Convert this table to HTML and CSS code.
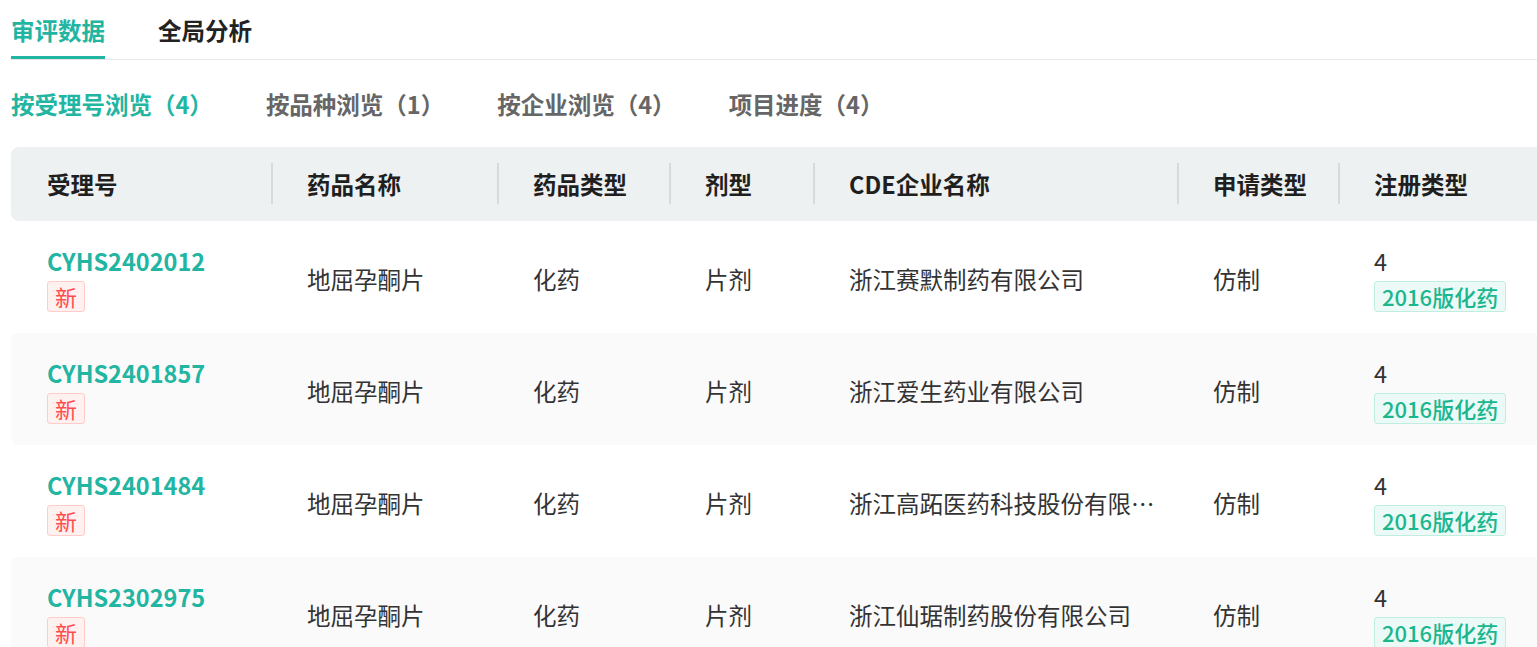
FILE: index.html
```html
<!DOCTYPE html>
<html lang="zh-CN">
<head>
<meta charset="utf-8">
<title>审评数据</title>
<link rel="stylesheet" href="styles.css">
</head>
<body>
<div class="page">
  <nav class="tabs">
    <a class="tab active">审评数据</a>
    <a class="tab">全局分析</a>
  </nav>
  <nav class="subtabs">
    <a class="subtab active">按受理号浏览（4）</a>
    <a class="subtab">按品种浏览（1）</a>
    <a class="subtab">按企业浏览（4）</a>
    <a class="subtab">项目进度（4）</a>
  </nav>
  <div class="table">
    <div class="row head">
      <div class="cell">受理号</div>
      <div class="cell sep">药品名称</div>
      <div class="cell sep">药品类型</div>
      <div class="cell sep">剂型</div>
      <div class="cell sep">CDE企业名称</div>
      <div class="cell sep">申请类型</div>
      <div class="cell sep">注册类型</div>
    </div>
    <div class="row">
      <div class="cell stack"><span class="code">CYHS2402012</span><span class="badge-new">新</span></div>
      <div class="cell">地屈孕酮片</div>
      <div class="cell">化药</div>
      <div class="cell">片剂</div>
      <div class="cell"><span class="ellipsis">浙江赛默制药有限公司</span></div>
      <div class="cell">仿制</div>
      <div class="cell stack"><span class="num">4</span><span class="tag">2016版化药</span></div>
    </div>
    <div class="row alt">
      <div class="cell stack"><span class="code">CYHS2401857</span><span class="badge-new">新</span></div>
      <div class="cell">地屈孕酮片</div>
      <div class="cell">化药</div>
      <div class="cell">片剂</div>
      <div class="cell"><span class="ellipsis">浙江爱生药业有限公司</span></div>
      <div class="cell">仿制</div>
      <div class="cell stack"><span class="num">4</span><span class="tag">2016版化药</span></div>
    </div>
    <div class="row">
      <div class="cell stack"><span class="code">CYHS2401484</span><span class="badge-new">新</span></div>
      <div class="cell">地屈孕酮片</div>
      <div class="cell">化药</div>
      <div class="cell">片剂</div>
      <div class="cell"><span class="ellipsis" title="浙江高跖医药科技股份有限公司">浙江高跖医药科技股份有限…</span></div>
      <div class="cell">仿制</div>
      <div class="cell stack"><span class="num">4</span><span class="tag">2016版化药</span></div>
    </div>
    <div class="row alt">
      <div class="cell stack"><span class="code">CYHS2302975</span><span class="badge-new">新</span></div>
      <div class="cell">地屈孕酮片</div>
      <div class="cell">化药</div>
      <div class="cell">片剂</div>
      <div class="cell"><span class="ellipsis">浙江仙琚制药股份有限公司</span></div>
      <div class="cell">仿制</div>
      <div class="cell stack"><span class="num">4</span><span class="tag">2016版化药</span></div>
    </div>
  </div>
</div>
</body>
</html>
```

FILE: styles.css
```css
* { box-sizing: border-box; }
html, body { margin: 0; padding: 0; background: #fff; }
body {
  font-family: "Noto Sans CJK SC", "Noto Sans", sans-serif;
  font-size: 23.5px;
  color: #333;
  overflow: hidden;
}
.page {
  padding: 0 0 0 11px;
  width: 1700px;
}
.tabs {
  display: flex;
  gap: 53px;
  border-bottom: 1px solid #e8e8e8;
  width: 1526px;
}
.tab {
  display: block;
  padding: 14px 0 10px;
  line-height: 32px;
  font-weight: 700;
  color: #222;
  border-bottom: 3px solid transparent;
}
.tab.active {
  color: #22b5a2;
  border-bottom-color: #22b5a2;
}
.subtabs {
  display: flex;
  gap: 53px;
  margin-top: 28px;
  line-height: 32px;
}
.subtab {
  font-weight: 700;
  color: #666;
}
.subtab.active { color: #22b5a2; }
.table {
  margin-top: 27px;
  width: 1560px;
}
.row {
  display: grid;
  grid-template-columns: 260px 226px 172px 144px 364px 161px 233px;
  height: 112px;
  border-radius: 8px;
}
.row.alt { background: #fafafa; }
.row.head {
  height: 74px;
  background: #edf1f2;
  font-weight: 700;
  color: #1f1f1f;
}
.cell {
  display: flex;
  align-items: center;
  padding: 3px 20px 0 36px;
  line-height: 32px;
  min-width: 0;
}
.head .cell { padding-top: 0; }
.cell.sep { position: relative; }
.head .cell.sep::before {
  content: "";
  position: absolute;
  left: 0;
  top: 16px;
  width: 1.5px;
  height: 41px;
  background: #d3dbdc;
}
.cell.stack {
  flex-direction: column;
  align-items: flex-start;
  justify-content: center;
}
.code {
  color: #22b5a2;
  font-weight: 700;
}
.num { color: #333; }
.badge-new {
  margin-top: 4px;
  display: inline-block;
  height: 31px;
  line-height: 29px;
  padding: 0 7px;
  font-size: 22px;
  color: #ff4d4f;
  background: #fff1f0;
  border: 1px solid #ffccc7;
  border-radius: 3px;
}
.tag {
  margin-top: 4px;
  display: inline-block;
  height: 31px;
  line-height: 29px;
  padding: 0 7px;
  font-size: 22px;
  font-weight: 500;
  color: #1bb68e;
  background: #ebfaf6;
  border: 1px solid #bfeedf;
  border-radius: 3px;
}
.ellipsis {
  display: block;
  white-space: nowrap;
}
```
